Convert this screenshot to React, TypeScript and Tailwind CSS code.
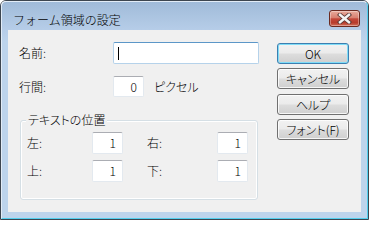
import React from "react";

const inputBase =
  "bg-white border border-[#e3e9ef] border-t-[#abadb3] rounded-[2px] flex items-center justify-end pr-[6px] text-[12px] leading-none";

function Btn({ label, def, className = "" }: { label: string; def?: boolean; className?: string }) {
  return (
    <div
      className={
        "h-[21px] w-[72px] rounded-[3px] border flex items-center justify-center text-[12px] text-black bg-[linear-gradient(to_bottom,#f2f2f2_0%,#ebebeb_48%,#dddddd_52%,#cfcfcf_100%)] " +
        (def
          ? "border-[#3c7fb1] shadow-[inset_0_0_0_1px_#7fdcf7]"
          : "border-[#707070] shadow-[inset_0_0_0_1px_rgba(255,255,255,0.8)]") +
        " " +
        className
      }
    >
      {label}
    </div>
  );
}

export default function App() {
  return (
    <div className="w-[369px] h-[220px] bg-white font-['Noto_Sans_CJK_JP',sans-serif] font-light text-black [font-feature-settings:'palt']">
      <div className="w-full h-full rounded-t-[6px] border border-[#3d4650]">
        <div className="w-full h-full rounded-t-[5px] border border-[#e2ecf7] border-r-[#52cfee] border-b-[#52cfee] bg-[linear-gradient(to_bottom,#a0bbd9_0px,#b6cde8_28px,#bdd4ec_40px,#bdd4ec_100%)] flex flex-col">
          {/* title bar */}
          <div className="h-[28px] flex items-start shrink-0">
            <div className="mt-[10px] ml-[11px] h-[16px] leading-[16px] text-[12px] text-black [font-feature-settings:normal]">
              フォーム領域の設定
            </div>
            <div className="ml-auto mr-[7px] mt-[8px] w-[31px] h-[17px] rounded-[3px] border border-[#6b2a20] bg-[linear-gradient(to_bottom,#e8ab9c_0%,#d88070_45%,#c3483a_52%,#b83c2c_78%,#d2705a_100%)] shadow-[inset_0_0_0_1px_rgba(255,255,255,0.35)] flex items-center justify-center">
              <svg width="15" height="11" viewBox="0 0 15 11">
                <path d="M3 1.8 L12 9.2 M12 1.8 L3 9.2" stroke="#5a3a36" strokeWidth="4.2" strokeLinecap="square" />
                <path d="M3 1.8 L12 9.2 M12 1.8 L3 9.2" stroke="#f4f4f4" strokeWidth="2.4" strokeLinecap="square" />
              </svg>
            </div>
          </div>
          {/* content */}
          <div className="flex-1 mx-[6px] mb-[6px] bg-[#f0f0f0] flex pl-[11px] pt-[12px]">
            <div className="w-[240px] flex flex-col">
              <div className="h-[22px] flex items-center">
                <div className="w-[94px] text-[12px]">名前:</div>
                <div className="w-[146px] h-[22px] bg-white border border-[#b5d2ea] border-t-[#5c97c8] rounded-[2px] flex items-center pl-[4px]">
                  <div className="w-[1px] h-[13px] bg-black" />
                </div>
              </div>
              <div className="mt-[12px] h-[21px] flex items-center">
                <div className="w-[94px] text-[12px]">行間:</div>
                <div className={inputBase + " w-[31px] h-[21px]"}>0</div>
                <div className="ml-[10px] text-[12px]">ピクセル</div>
              </div>
              <div className="mt-[23px] ml-[1px] w-[238px] h-[80px] relative rounded-[3px] border border-[#d5dfe5] shadow-[inset_0_0_0_1px_#ffffff] pl-[6px] pt-[11px]">
                <div className="absolute left-[5px] top-[-9px] px-[2px] bg-[#f0f0f0] text-[12px] leading-[16px]">
                  テキストの位置
                </div>
                <div className="h-[22px] flex items-center">
                  <div className="w-[65px] text-[12px]">左:</div>
                  <div className={inputBase + " w-[31px] h-[22px]"}>1</div>
                  <div className="ml-[24px] w-[70px] text-[12px]">右:</div>
                  <div className={inputBase + " w-[31px] h-[22px]"}>1</div>
                </div>
                <div className="mt-[6px] h-[22px] flex items-center">
                  <div className="w-[65px] text-[12px]">上:</div>
                  <div className={inputBase + " w-[31px] h-[22px]"}>1</div>
                  <div className="ml-[24px] w-[70px] text-[12px]">下:</div>
                  <div className={inputBase + " w-[31px] h-[22px]"}>1</div>
                </div>
              </div>
            </div>
            <div className="ml-[18px] mt-[1px] flex flex-col">
              <Btn label="OK" def />
              <Btn label="キャンセル" className="mt-[4px]" />
              <Btn label="ヘルプ" className="mt-[5px]" />
              <Btn label="フォント(F)" className="mt-[4px]" />
            </div>
          </div>
        </div>
      </div>
    </div>
  );
}
